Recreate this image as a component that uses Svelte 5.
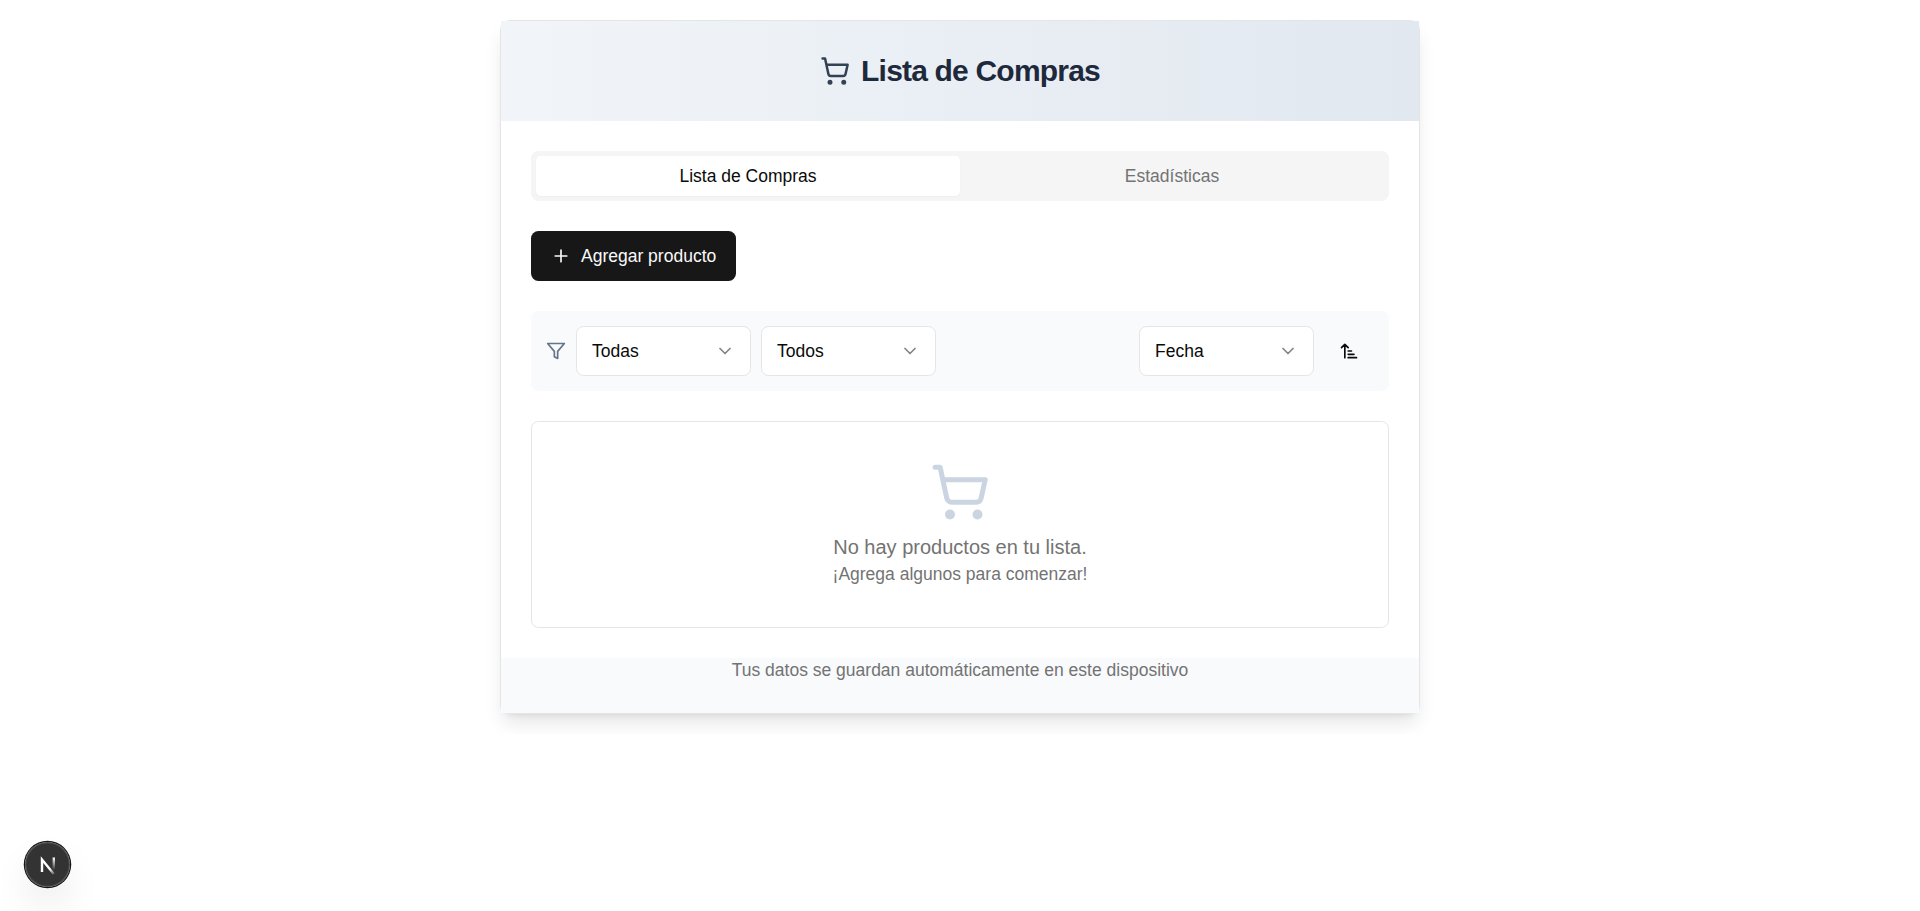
<script>
  let tab = $state('lista');
  const tabs = [
    { id: 'lista', label: 'Lista de Compras' },
    { id: 'stats', label: 'Estadísticas' }
  ];
</script>

{#snippet cart(cls)}
  <svg class={cls} viewBox="0 0 24 24"><circle cx="8" cy="21" r="1" /><circle cx="19" cy="21" r="1" /><path d="M2.05 2.05h2l2.66 12.42a2 2 0 0 0 2 1.58h9.78a2 2 0 0 0 1.95-1.57l1.65-7.43H5.12" /></svg>
{/snippet}

{#snippet select(label)}
  <button class="select">
    <span>{label}</span>
    <svg class="icon faded" viewBox="0 0 24 24"><path d="m6 9 6 6 6-6" /></svg>
  </button>
{/snippet}

<main>
  <section class="card">
    <header>
      {@render cart('cart-small')}
      <h1>Lista de Compras</h1>
    </header>

    <div class="content">
      <div class="tabs" role="tablist">
        {#each tabs as t}
          <button role="tab" aria-selected={tab === t.id} class:active={tab === t.id} onclick={() => (tab = t.id)}>{t.label}</button>
        {/each}
      </div>

      <button class="add">
        <svg class="icon" viewBox="0 0 24 24"><path d="M5 12h14M12 5v14" /></svg>
        <span>Agregar producto</span>
      </button>

      <div class="filters">
        <div class="group">
          <svg class="icon slate" viewBox="0 0 24 24"><path d="M22 3H2l8 9.46V19l4 2v-8.54L22 3z" /></svg>
          {@render select('Todas')}
          {@render select('Todos')}
        </div>
        <div class="group">
          {@render select('Fecha')}
          <button class="sort" aria-label="Orden">
            <svg class="icon" viewBox="0 0 24 24"><path d="m3 8 4-4 4 4M7 4v16M11 12h4M11 16h7M11 20h10" /></svg>
          </button>
        </div>
      </div>

      <div class="empty">
        {@render cart('cart-large')}
        <p class="lead">No hay productos en tu lista.</p>
        <p>¡Agrega algunos para comenzar!</p>
      </div>
    </div>

    <footer>Tus datos se guardan automáticamente en este dispositivo</footer>
  </section>
</main>

<div class="badge">
  <svg viewBox="0 0 40 40" fill="none">
    <defs>
      <linearGradient id="diag" x1="22" y1="25" x2="27.5" y2="32" gradientUnits="userSpaceOnUse"><stop stop-color="#fff" /><stop offset=".9" stop-color="#fff" stop-opacity="0" /></linearGradient>
      <linearGradient id="stem" x1="25.8" y1="13.5" x2="25.8" y2="26" gradientUnits="userSpaceOnUse"><stop stop-color="#fff" /><stop offset="1" stop-color="#fff" stop-opacity="0" /></linearGradient>
    </defs>
    <path d="M14 28V15.6L25.8 30" stroke="url(#diag)" stroke-width="2.4" />
    <path d="M25.8 13.5v12.5" stroke="url(#stem)" stroke-width="2.4" />
  </svg>
</div>

<style>
  :global(body) {
    background: #fff;
    color: #0a0a0a;
    font: 17.5px/25px "Liberation Sans", Arial, sans-serif;
  }
  :global(#app *) { box-sizing: border-box; }
  main { max-width: 960px; margin: 0 auto; padding: 20px; }
  h1, p { margin: 0; }
  button { border: 0; padding: 0; background: none; color: inherit; font: inherit; cursor: pointer; }
  svg { display: block; flex: none; }
  .icon, .cart-small, .cart-large {
    fill: none;
    stroke: currentColor;
    stroke-width: 2;
    stroke-linecap: round;
    stroke-linejoin: round;
  }
  .icon { width: 20px; height: 20px; }
  .faded { opacity: .5; }
  .slate { color: #64748b; }
  .card {
    border: 1px solid #e5e5e5;
    border-radius: 10px;
    background: #fff;
    box-shadow: 0 12.5px 18.75px -3.75px rgba(0, 0, 0, .1), 0 5px 7.5px -5px rgba(0, 0, 0, .1);
  }
  header {
    display: flex;
    align-items: center;
    justify-content: center;
    gap: 11px;
    padding: 30px;
    background: linear-gradient(to right, #f1f5f9, #e2e8f0);
    color: #1e293b;
  }
  h1 { font-size: 30px; line-height: 40px; letter-spacing: -.81px; font-weight: 700; }
  .cart-small { width: 30px; height: 30px; color: #334155; }
  .content { display: flex; flex-direction: column; align-items: stretch; gap: 30px; padding: 30px; }
  .tabs {
    display: grid;
    grid-template-columns: 1fr 1fr;
    height: 50px;
    padding: 5px;
    border-radius: 7.5px;
    background: #f5f5f5;
    color: #737373;
  }
  .tabs button { border-radius: 5px; }
  .tabs .active { background: #fff; color: #0a0a0a; box-shadow: 0 1px 2px rgba(0, 0, 0, .03); }
  .add {
    display: flex;
    align-items: center;
    align-self: flex-start;
    gap: 10px;
    height: 50px;
    padding: 0 20px;
    border-radius: 7.5px;
    background: #171717;
    color: #fafafa;
  }
  .filters {
    display: flex;
    align-items: center;
    justify-content: space-between;
    padding: 15px;
    border-radius: 7.5px;
    background: #f8fafc;
  }
  .group { display: flex; align-items: center; gap: 10px; }
  .select {
    display: flex;
    align-items: center;
    justify-content: space-between;
    width: 175px;
    height: 50px;
    padding: 0 15px;
    border: 1px solid #e5e5e5;
    border-radius: 7.5px;
    background: #fff;
  }
  .sort { display: grid; place-items: center; width: 50px; height: 50px; }
  .empty {
    display: flex;
    flex-direction: column;
    align-items: center;
    padding: 40px;
    border: 1px solid #e5e5e5;
    border-radius: 7.5px;
    color: #737373;
  }
  .cart-large { width: 60px; height: 60px; margin-bottom: 10px; color: #cbd5e1; }
  .lead { font-size: 20px; line-height: 30px; }
  footer { height: 55px; background: #f8fafc; color: #737373; text-align: center; }
  .badge {
    position: fixed;
    left: 25px;
    bottom: 24.5px;
    display: grid;
    place-items: center;
    width: 45px;
    height: 45px;
    border-radius: 50%;
    background: rgba(0, 0, 0, .8);
    box-shadow: 0 0 0 1.25px #171717, inset 0 0 0 1.25px rgba(255, 255, 255, .14), 0 20px 40px -10px rgba(0, 0, 0, .24);
  }
  .badge svg { width: 40px; height: 40px; }
</style>
